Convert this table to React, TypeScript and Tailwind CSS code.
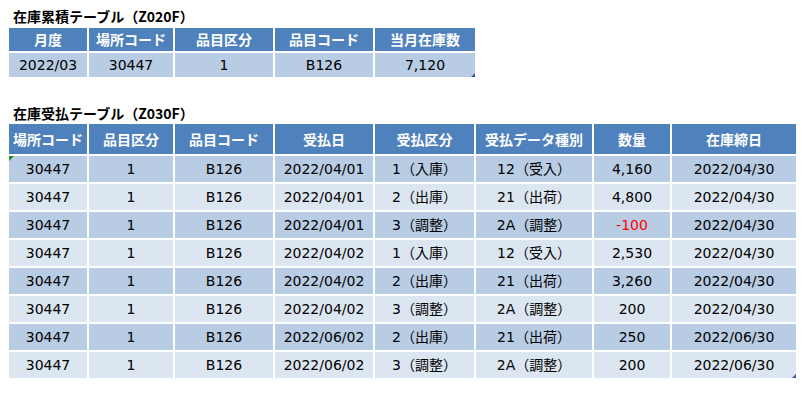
const summaryHead = ["月度", "場所コード", "品目区分", "品目コード", "当月在庫数"];
const summaryRow = ["2022/03", "30447", "1", "B126", "7,120"];

const ledgerHead = ["場所コード", "品目区分", "品目コード", "受払日", "受払区分", "受払データ種別", "数量", "在庫締日"];
const ledgerRows = [
  ["30447", "1", "B126", "2022/04/01", "1（入庫）", "12（受入）", "4,160", "2022/04/30"],
  ["30447", "1", "B126", "2022/04/01", "2（出庫）", "21（出荷）", "4,800", "2022/04/30"],
  ["30447", "1", "B126", "2022/04/01", "3（調整）", "2A（調整）", "-100", "2022/04/30"],
  ["30447", "1", "B126", "2022/04/02", "1（入庫）", "12（受入）", "2,530", "2022/04/30"],
  ["30447", "1", "B126", "2022/04/02", "2（出庫）", "21（出荷）", "3,260", "2022/04/30"],
  ["30447", "1", "B126", "2022/04/02", "3（調整）", "2A（調整）", "200", "2022/04/30"],
  ["30447", "1", "B126", "2022/06/02", "2（出庫）", "21（出荷）", "250", "2022/06/30"],
  ["30447", "1", "B126", "2022/06/02", "3（調整）", "2A（調整）", "200", "2022/06/30"],
];

// Excel-style selection handle in the table's bottom-right corner
function Corner() {
  return (
    <span className="absolute bottom-0 right-0 h-0 w-0 border-b-[4px] border-l-[4px] border-b-[#3f51b5] border-l-transparent" />
  );
}

export default function App() {
  return (
    <div className="h-[398px] w-[812px] bg-white pl-[9px] text-black">
      <div className="flex h-[28px] items-center pl-[4px] pt-[3px] font-[family-name:'Noto_Sans_CJK_JP','DejaVu_Sans',sans-serif] text-[14px] font-bold leading-[16px]">
        在庫累積テーブル（Z020F）
      </div>

      <div className="relative grid w-[466px] grid-cols-[78px_84px_98px_98px_100px] gap-[2px]">
        {summaryHead.map((h) => (
          <div
            key={h}
            className="flex h-[23px] items-center justify-center bg-[#4f81bd] font-[family-name:'Noto_Sans_CJK_JP','DejaVu_Sans',sans-serif] text-[14px] font-bold text-white"
          >
            {h}
          </div>
        ))}
        {summaryRow.map((v, i) => (
          <div
            key={i}
            className="flex h-[24px] items-center justify-center bg-[#b8cce4] font-[family-name:'DejaVu_Sans','Noto_Sans_CJK_JP',sans-serif] text-[14px]"
          >
            {v}
          </div>
        ))}
        <Corner />
      </div>

      <div className="flex h-[47px] items-end pb-[3px] pl-[4px] font-[family-name:'Noto_Sans_CJK_JP','DejaVu_Sans',sans-serif] text-[14px] font-bold leading-[16px]">
        在庫受払テーブル（Z030F）
      </div>

      <div className="relative grid w-[787px] grid-cols-[78px_84px_98px_98px_99px_116px_76px_124px] gap-[2px]">
        {ledgerHead.map((h) => (
          <div
            key={h}
            className="flex h-[30px] items-center justify-center whitespace-nowrap bg-[#4f81bd] font-[family-name:'Noto_Sans_CJK_JP','DejaVu_Sans',sans-serif] text-[14px] font-bold text-white"
          >
            {h}
          </div>
        ))}
        {ledgerRows.map((row, r) =>
          row.map((v, i) => (
            <div
              key={`${r}-${i}`}
              className={`relative flex h-[26px] items-center justify-center whitespace-nowrap font-[family-name:'DejaVu_Sans','Noto_Sans_CJK_JP',sans-serif] text-[14px] ${
                r % 2 === 0 ? "bg-[#b8cce4]" : "bg-[#dce6f1]"
              } ${v.startsWith("-") ? "text-[#ff0000]" : ""}`}
            >
              {r === 0 && i === 0 && (
                <span className="absolute left-0 top-0 h-0 w-0 border-r-[5px] border-t-[5px] border-r-transparent border-t-[#1e8c1e]" />
              )}
              {v}
            </div>
          ))
        )}
        <Corner />
      </div>
    </div>
  );
}
